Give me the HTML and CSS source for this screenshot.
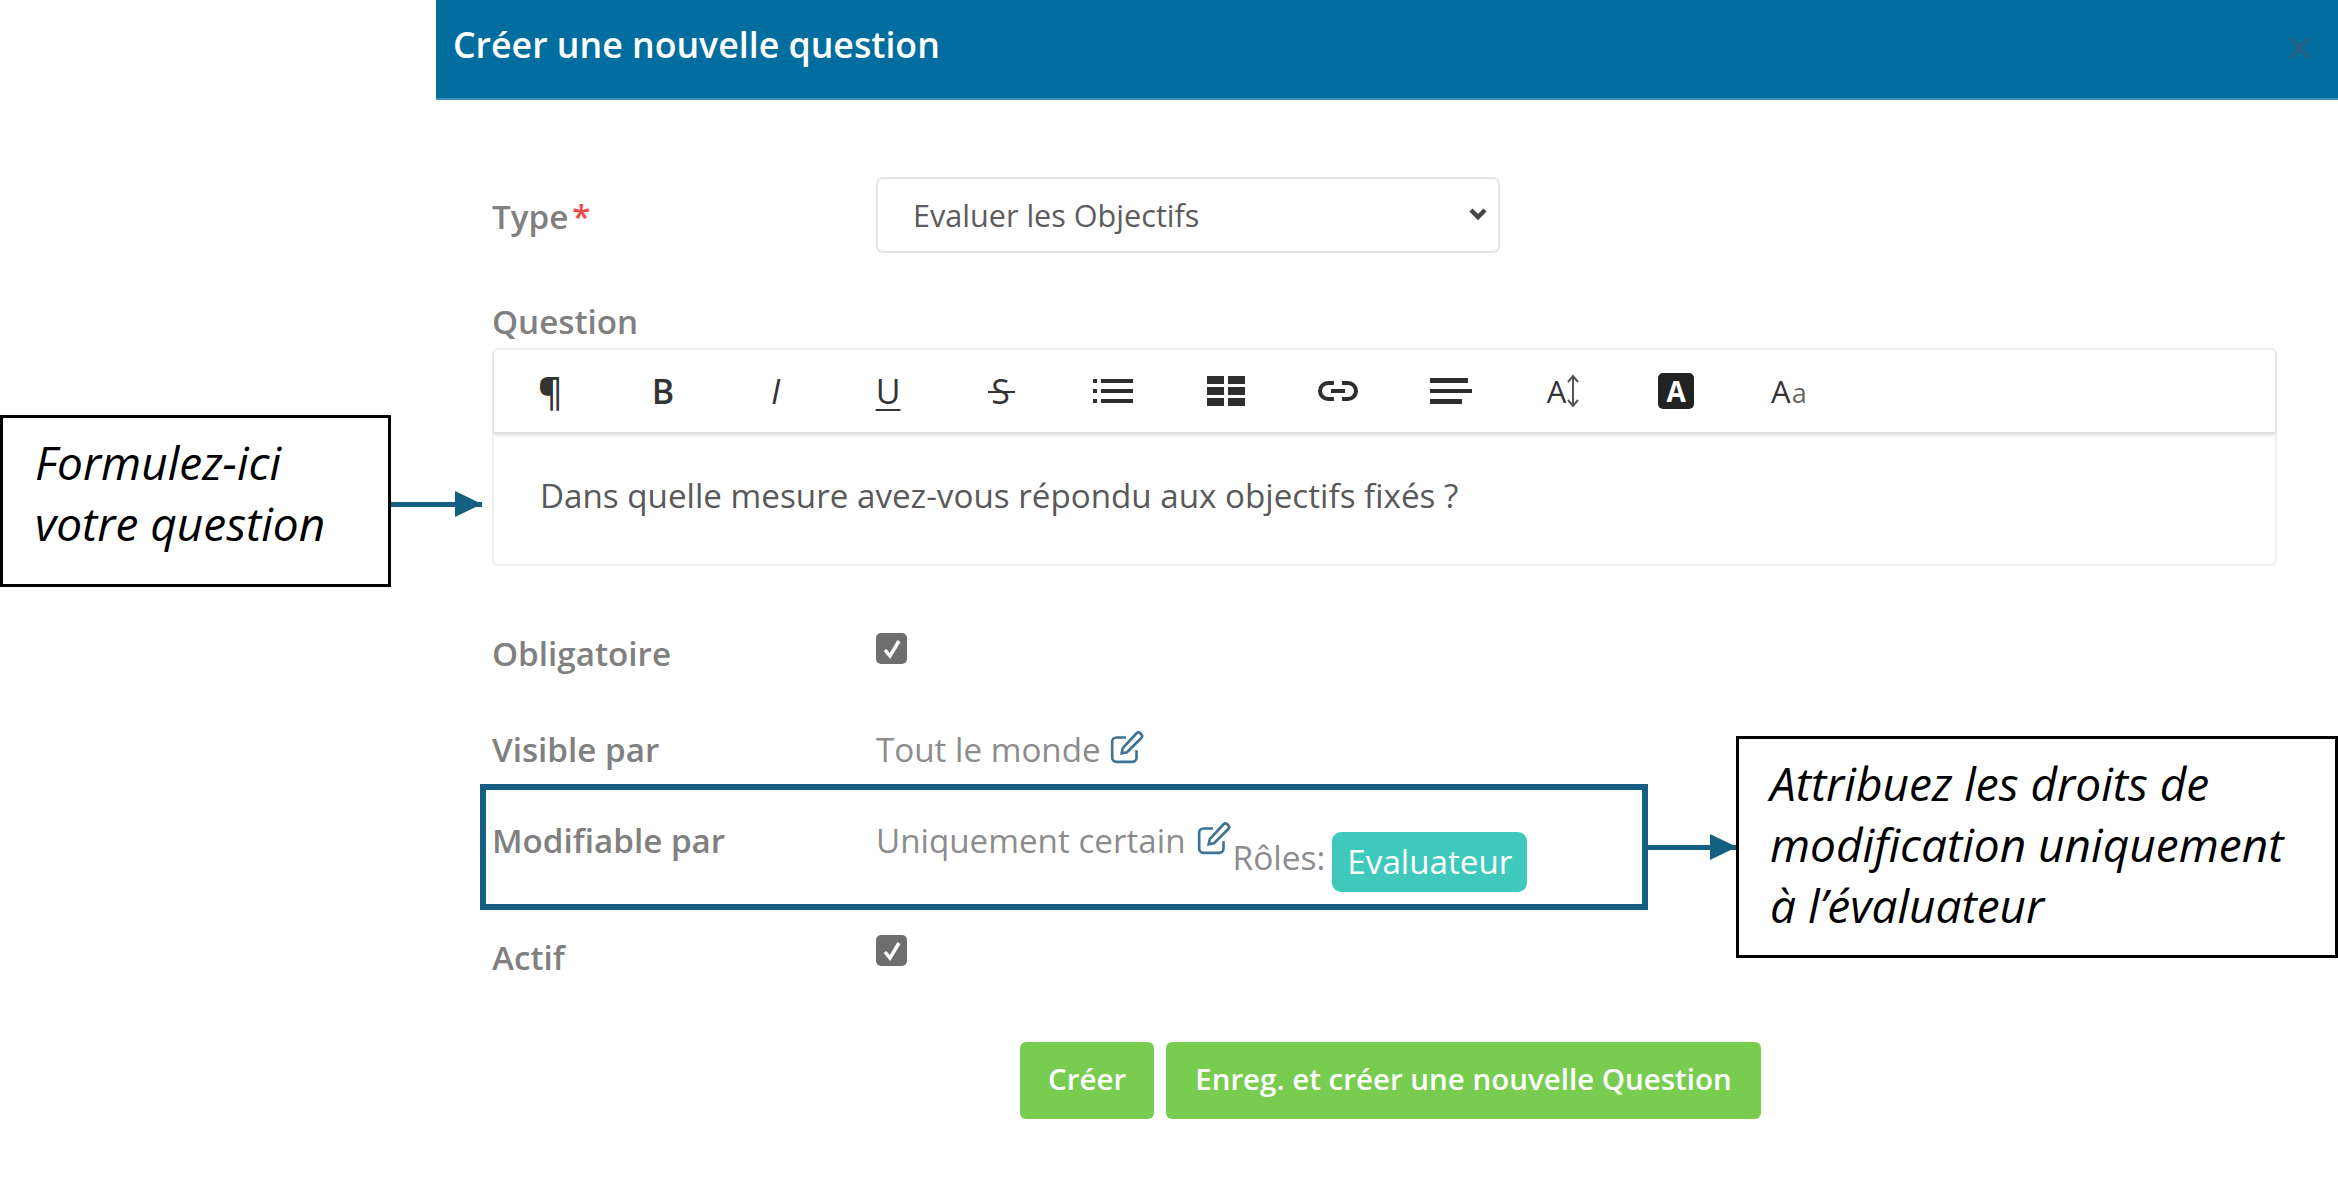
FILE: index.html
```html
<!DOCTYPE html>
<html lang="fr">
<head>
    <meta charset="UTF-8">
    <title>Créer une nouvelle question</title>
    <link rel="stylesheet" href="styles.css">
</head>
<body>

<div class="modal">
    <div class="modal-header">
        <h1>Créer une nouvelle question</h1>
        <svg class="close-icon" width="24" height="24" viewBox="0 0 24 24"><path d="M2 2 22 22M22 2 2 22"/></svg>
    </div>

    <div class="modal-body">
        <div class="row row-type">
            <label class="field-label" for="questionType">Type<span class="required">*</span></label>
            <div class="select-wrap">
                <select id="questionType"><option>Evaluer les Objectifs</option></select>
                <svg class="chevron" width="20" height="14" viewBox="0 0 20 14"><path d="M3 3 10 10 17 3"/></svg>
            </div>
        </div>

        <div class="field-label question-label">Question</div>
        <div class="editor">
            <div class="toolbar">
                <span class="tool tool-text tool-para">¶</span>
                <span class="tool tool-text tool-bold">B</span>
                <span class="tool tool-text tool-italic">I</span>
                <span class="tool tool-text tool-under">U</span>
                <span class="tool tool-text tool-strike">S</span>
                <span class="tool">
                    <svg width="44" height="30" viewBox="0 0 44 30"><path d="M2 3h4v4H2zM2 13h4v4H2zM2 23h4v4H2zM10 3h32v4H10zM10 13h32v4H10zM10 23h32v4H10z"/></svg>
                </span>
                <span class="tool">
                    <svg width="38" height="30" viewBox="0 0 38 30"><path d="M0 0h17v8H0zM21 0h17v8H21zM0 11h17v8H0zM21 11h17v8H21zM0 22h17v8H0zM21 22h17v8H21z"/></svg>
                </span>
                <span class="tool">
                    <svg width="42" height="24" viewBox="0 0 42 24"><path class="link-line" d="M17 4H11a8 8 0 0 0 0 16h6M25 4h6a8 8 0 0 1 0 16h-6M14 12h14"/></svg>
                </span>
                <span class="tool">
                    <svg width="42" height="28" viewBox="0 0 42 28"><path d="M0 1h38v5H0zM0 12h42v4H0zM0 22h32v5H0z"/></svg>
                </span>
                <span class="tool tool-text tool-height">A<svg width="14" height="34" viewBox="0 0 14 34"><path class="thin-line" d="M7 2v30M2 8l5-6 5 6M2 26l5 6 5-6"/></svg></span>
                <span class="tool"><span class="tool-color">A</span></span>
                <span class="tool tool-text tool-case">A<small>a</small></span>
            </div>
            <div class="editor-text">Dans quelle mesure avez-vous répondu aux objectifs fixés ?</div>
        </div>

        <div class="row row-obligatoire">
            <div class="field-label">Obligatoire</div>
            <span class="check">
                <svg width="20" height="22" viewBox="0 0 20 22"><path d="M3 12 8 18 17 3"/></svg>
            </span>
        </div>

        <div class="row row-visible">
            <div class="field-label">Visible par</div>
            <div class="field-value">Tout le monde</div>
            <svg class="edit-icon" width="36" height="36" viewBox="0 0 34 34"><path d="M26 20v7a4 4 0 0 1-4 4H7a4 4 0 0 1-4-4V12a4 4 0 0 1 4-4h9"/><path d="M13 18 26 4a2.500 2.500 0 0 1 3.500 0l1 1a2.500 2.500 0 0 1 0 3.500L17 22l-5 1z"/></svg>
        </div>

        <div class="row row-modifiable">
            <div class="field-label">Modifiable par</div>
            <div class="field-value">Uniquement certain</div>
            <svg class="edit-icon" width="36" height="36" viewBox="0 0 34 34"><path d="M26 20v7a4 4 0 0 1-4 4H7a4 4 0 0 1-4-4V12a4 4 0 0 1 4-4h9"/><path d="M13 18 26 4a2.500 2.500 0 0 1 3.500 0l1 1a2.500 2.500 0 0 1 0 3.500L17 22l-5 1z"/></svg>
            <div class="roles-label">Rôles:</div>
            <div class="role-badge">Evaluateur</div>
        </div>

        <div class="row row-actif">
            <div class="field-label">Actif</div>
            <span class="check">
                <svg width="20" height="22" viewBox="0 0 20 22"><path d="M3 12 8 18 17 3"/></svg>
            </span>
        </div>

        <div class="actions">
            <button>Créer</button>
            <button>Enreg. et créer une nouvelle Question</button>
        </div>
    </div>
</div>

<!-- Annotations on top of the screenshot -->
<div class="note note-left">Formulez-ici<br>votre question</div>
<div class="arrow arrow-left"></div>
<div class="highlight"></div>
<div class="arrow arrow-right"></div>
<div class="note note-right">Attribuez les droits de<br>modification uniquement<br>à l’évaluateur</div>

</body>
</html>
```

FILE: styles.css
```css
/* General styling */
html, body {
    height: 1180px;
    overflow: hidden;
}
body {
    font-family: "Open Sans", Arial, sans-serif;
    margin: 0;
    position: relative;
    background: #fff;
    color: #555;
}

/* Modal */
.modal {
    margin-left: 436px;
}
.modal-header {
    height: 100px;
    box-sizing: border-box;
    background-color: #026ea0;
    border-bottom: 2px solid #3c8fbb;
    display: flex;
    align-items: center;
    justify-content: space-between;
    padding: 0 26px 10px 17px;
}
.modal-header h1 {
    margin: 0;
    color: #fff;
    font-size: 35.700px;
    font-weight: 600;
}
.close-icon {
    margin-top: 8px;
    stroke: #24618a;
    stroke-width: 4;
    fill: none;
}
.modal-body {
    padding: 77px 61px 0 56px;
}
.row {
    display: flex;
    align-items: flex-start;
}
.field-label {
    width: 384px;
    flex-shrink: 0;
    font-size: 33.200px;
    line-height: 42px;
    font-weight: 600;
    color: #808080;
}
.required {
    color: #ef4a4a;
    margin-left: 4px;
}
.field-value {
    font-size: 33.200px;
    line-height: 42px;
    color: #8c8c8c;
}

/* Type select */
.row-type {
    height: 76px;
    align-items: center;
}
.row-type .field-label {
    margin-top: 4px;
}
.select-wrap {
    position: relative;
    width: 624px;
    height: 76px;
}
.select-wrap select {
    appearance: none;
    width: 100%;
    height: 100%;
    box-sizing: border-box;
    padding: 0 35px;
    background: #fff;
    border: 2px solid #e4e4e4;
    border-radius: 7px;
    font-family: "Open Sans", Arial, sans-serif;
    font-size: 30.600px;
    color: #5c5c5c;
}
.chevron {
    position: absolute;
    top: 30px;
    right: 12px;
    fill: none;
    stroke: #444;
    stroke-width: 4.500;
}

/* Question editor */
.question-label {
    width: auto;
    margin-top: 48px;
    height: 47px;
}
.editor {
    height: 218px;
    box-sizing: border-box;
    border: 2px solid #eeeeee;
    border-radius: 6px;
}
.toolbar {
    height: 84px;
    box-sizing: border-box;
    display: flex;
    align-items: center;
    padding-left: 0;
    border-bottom: 2px solid #dddddd;
    box-shadow: 0 2px 3px rgba(0, 0, 0, 0.1);
}
.tool {
    width: 112.600px;
    flex-shrink: 0;
    display: flex;
    align-items: center;
    justify-content: center;
    color: #333;
}
.tool svg {
    fill: #2e2e2e;
}
.tool-text {
    font-size: 34px;
    line-height: 40px;
}
.tool-para {
    font-size: 38px;
    font-weight: 600;
}
.tool-bold {
    font-weight: 600;
}
.tool-italic {
    font-style: italic;
}
.tool-under {
    text-decoration: underline;
    text-underline-offset: 5px;
    text-decoration-thickness: 2px;
}
.tool-strike {
    position: relative;
}
.tool-strike::after {
    content: "";
    position: absolute;
    left: 44px;
    top: 20px;
    width: 27px;
    height: 2px;
    background: #333;
}
.tool .link-line {
    fill: none;
    stroke: #2e2e2e;
    stroke-width: 4;
}
.tool .thin-line {
    fill: none;
    stroke: #555;
    stroke-width: 2;
}
.tool-height {
    font-size: 31px;
}
.tool-color {
    width: 36px;
    height: 36px;
    display: flex;
    align-items: center;
    justify-content: center;
    background: #222;
    border-radius: 5px;
    color: #fff;
    font-size: 28px;
    font-weight: 700;
}
.tool-case {
    font-size: 31px;
}
.tool-case small {
    font-size: 27px;
    color: #666;
    margin-top: 3px;
    margin-left: 1px;
}
.editor-text {
    padding: 42px 0 0 46px;
    font-size: 33.200px;
    line-height: 40px;
    color: #595959;
}

/* Checkboxes */
.check {
    width: 31px;
    height: 31px;
    background: #6e6e6e;
    border-radius: 5px;
    display: flex;
    align-items: center;
    justify-content: center;
}
.check svg {
    fill: none;
    stroke: #fff;
    stroke-width: 3.500;
}

/* Rows below the editor */
.row-obligatoire {
    margin-top: 67px;
    height: 96px;
}
.row-visible {
    height: 91px;
}
.row-visible .edit-icon {
    margin-left: 8px;
}
.row-modifiable {
    height: 115px;
}
.row-actif {
    height: 107px;
}
.row-actif .field-label {
    margin-top: 2px;
}
.edit-icon {
    fill: none;
    stroke: #3e7396;
    stroke-width: 2.500;
    margin: 0 0 0 11px;
    flex-shrink: 0;
}
.roles-label {
    font-size: 33.500px;
    line-height: 42px;
    color: #8c8c8c;
    margin-top: 16px;
}
.role-badge {
    margin-left: 7px;
    margin-top: 12px;
    padding: 0 15px;
    height: 60px;
    line-height: 60px;
    background-color: #3ec9bc;
    border-radius: 9px;
    color: #fff;
    font-size: 33.200px;
}

/* Buttons */
.actions {
    display: flex;
    gap: 12px;
    margin-left: 528px;
}
button {
    height: 77px;
    padding: 0 28px 4px;
    background-color: #78cd51;
    color: #fff;
    border: none;
    border-radius: 6px;
    font-family: "Open Sans", Arial, sans-serif;
    font-size: 29.500px;
    font-weight: 600;
}
button + button {
    padding: 0 29px 4px;
}

/* Annotations */
.note {
    position: absolute;
    box-sizing: border-box;
    border: 3px solid #000;
    background: #fff;
    color: #000;
    font-family: "Open Sans", Arial, sans-serif;
    font-style: italic;
    font-size: 46px;
    line-height: 61px;
}
.note-left {
    left: 0;
    top: 415px;
    width: 391px;
    height: 172px;
    padding: 14px 0 0 32px;
}
.note-right {
    left: 1736px;
    top: 736px;
    width: 602px;
    height: 222px;
    padding: 14px 0 0 31px;
}
.highlight {
    position: absolute;
    left: 480px;
    top: 784px;
    width: 1168px;
    height: 126px;
    box-sizing: border-box;
    border: 6px solid #156082;
}
.arrow {
    position: absolute;
    height: 5px;
    background: #156082;
}
.arrow::after {
    content: "";
    position: absolute;
    right: 0;
    top: -11px;
    border-style: solid;
    border-width: 13.500px 0 13.500px 27px;
    border-color: transparent transparent transparent #156082;
}
.arrow-left {
    left: 391px;
    top: 502px;
    width: 91px;
}
.arrow-right {
    left: 1648px;
    top: 845px;
    width: 89px;
}
```
